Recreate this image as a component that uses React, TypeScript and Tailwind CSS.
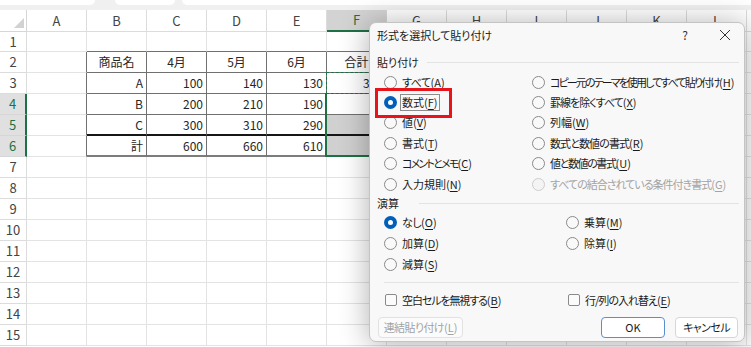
import React from 'react';

const COLS = ['A', 'B', 'C', 'D', 'E', 'F', 'G', 'H', 'I', 'J', 'K', 'L', 'M'];
const ROWS = Array.from({ length: 15 }, (_, i) => i + 1);

const DATA: Record<number, (string | undefined)[]> = {
  2: [undefined, '商品名', '4月', '5月', '6月', '合計'],
  3: [undefined, 'A', '100', '140', '130', '370'],
  4: [undefined, 'B', '200', '210', '190'],
  5: [undefined, 'C', '300', '310', '290'],
  6: [undefined, '計', '600', '660', '610'],
};

function GridCell({ r, c }: { r: number; c: number }) {
  const inTable = r >= 2 && r <= 6 && c >= 1 && c <= 5;
  const leftOfTable = r >= 2 && r <= 6 && c === 0;
  const aboveTable = r === 1 && c >= 1 && c <= 5;
  const rightCls = inTable || leftOfTable ? 'border-r border-r-[#707070]' : 'border-r border-r-[#e3e3e3]';
  let bottomCls = 'border-b border-b-[#e3e3e3]';
  if (aboveTable) bottomCls = 'border-b border-b-[#707070]';
  if (inTable)
    bottomCls =
      r === 5 ? 'border-b-2 border-b-[#161616]' : r === 6 ? 'border-b-2 border-b-[#7c7c7c]' : 'border-b border-b-[#707070]';
  const shaded = c === 5 && (r === 5 || r === 6);
  const text = DATA[r]?.[c];
  const center = r === 2;
  return (
    <div
      className={`w-[60px] shrink-0 h-full flex items-center px-[3px] ${center ? 'justify-center' : 'justify-end'} ${rightCls} ${bottomCls} ${shaded ? 'bg-[#d0d0d0]' : 'bg-white'}`}
    >
      {text}
    </div>
  );
}

function Sheet() {
  return (
    <div className="flex flex-col text-[12px] text-[#262626]">
      {/* top strip */}
      <div className="h-[10px] bg-[#f0f0f0] flex items-start">
        <div className="w-[95px] h-[5px] bg-white rounded-br-[5px]" />
        <div className="w-[60px] h-[5px] bg-white rounded-b-[5px] ml-[20px]" />
        <div className="flex-1 h-[5px] bg-white rounded-bl-[5px] ml-[7px]" />
      </div>
      {/* column headers */}
      <div className="flex h-[22px]">
        <div className="w-[27px] shrink-0 h-full border-r border-b border-[#d6d6d6] bg-white relative flex items-end justify-end pr-[2px] pb-[3px]">
          <div className="w-0 h-0 border-l-[10px] border-l-transparent border-b-[10px] border-b-[#d2d2d2]" />
        </div>
        {COLS.map((c) =>
          c === 'F' ? (
            <div
              key={c}
              className="w-[60px] shrink-0 h-full flex items-center justify-center bg-[#d3d3d3] text-[#1e7145] border-r border-r-[#d6d6d6] border-b-2 border-b-[#1e7145] text-[13px]"
            >
              {c}
            </div>
          ) : (
            <div
              key={c}
              className="w-[60px] shrink-0 h-full flex items-center justify-center bg-white text-[#444] border-r border-b border-[#dcdcdc] text-[13px]"
            >
              {c}
            </div>
          )
        )}
      </div>
      {ROWS.map((r) => {
        const hl = r >= 4 && r <= 6;
        return (
          <div key={r} className={`flex ${r === 1 ? 'h-[20px]' : 'h-[21px]'}`}>
            {hl ? (
              <div className="w-[27px] shrink-0 h-full flex items-center justify-center bg-[#e0e0e0] text-[#1e7145] border-r-2 border-r-[#1e7145] border-b border-b-[#d6d6d6] text-[13px]">
                {r}
              </div>
            ) : (
              <div className="w-[27px] shrink-0 h-full flex items-center justify-center bg-white text-[#444] border-r border-b border-[#dcdcdc] text-[13px]">
                {r}
              </div>
            )}
            {COLS.map((_, c) => (
              <GridCell key={c} r={r} c={c} />
            ))}
          </div>
        );
      })}
    </div>
  );
}

function Radio({ checked, disabled }: { checked?: boolean; disabled?: boolean }) {
  if (checked)
    return (
      <span className="w-[13px] h-[13px] rounded-full bg-[#005fb8] flex items-center justify-center shrink-0">
        <span className="w-[5px] h-[5px] rounded-full bg-white" />
      </span>
    );
  return disabled ? (
    <span className="w-[13px] h-[13px] rounded-full border border-[#cdcdcd] bg-[#f4f4f4] shrink-0" />
  ) : (
    <span className="w-[13px] h-[13px] rounded-full border border-[#8a8a8a] bg-[#f9f9f9] shrink-0" />
  );
}

function Acc({ text, k, t }: { text: string; k: string; t?: string }) {
  return (
    <>
      <span className={t ?? ''}>{text}</span>(<span className="underline underline-offset-[2px]">{k}</span>)
    </>
  );
}

function Label({
  text,
  k,
  focus,
  disabled,
  t,
}: {
  text: string;
  k: string;
  focus?: boolean;
  disabled?: boolean;
  t?: string;
}) {
  return (
    <span
      className={`ml-[3px] px-[1px] leading-[15px] whitespace-nowrap border ${focus ? 'border-[#8c8c8c]' : 'border-transparent'} ${disabled ? 'text-[#a3a3a3]' : 'text-[#1b1b1b]'}`}
    >
      <Acc text={text} k={k} t={t} />
    </span>
  );
}

function Opt({
  text,
  k,
  checked,
  focus,
  disabled,
  h,
  t,
}: {
  text: string;
  k: string;
  checked?: boolean;
  focus?: boolean;
  disabled?: boolean;
  h: string;
  t?: string;
}) {
  return (
    <div className={`flex items-center ${h}`}>
      <Radio checked={checked} disabled={disabled} />
      <Label text={text} k={k} focus={focus} disabled={disabled} t={t} />
    </div>
  );
}

function Check({ text, k, t }: { text: string; k: string; t?: string }) {
  return (
    <div className="flex items-center">
      <span className="w-[12px] h-[12px] rounded-[2px] border border-[#8a8a8a] bg-[#fbfbfb] shrink-0" />
      <span className="ml-[4px] px-[1px] whitespace-nowrap text-[#1b1b1b]">
        <Acc text={text} k={k} t={t} />
      </span>
    </div>
  );
}

function Dialog() {
  return (
    <div className="absolute left-[369px] top-[22px] w-[376px] h-[320px] rounded-[7px] border border-[#c4c4c4] bg-[#f8f8f8] shadow-[0_2px_30px_rgba(0,0,0,0.32)] flex flex-col text-[11px] [font-feature-settings:'palt']">
      {/* title */}
      <div className="h-[24px] flex items-center pl-[7px] pr-[9px]">
        <span className="flex-1 text-[#1b1b1b]">形式を選択して貼り付け</span>
        <span className="w-[20px] text-center text-[#333] text-[12px] mr-[20px]">?</span>
        <svg width="20" height="12" viewBox="0 0 20 12" className="shrink-0">
          <path d="M5 1 L15 11 M15 1 L5 11" stroke="#333" strokeWidth="1" fill="none" />
        </svg>
      </div>
      {/* paste group */}
      <div className="h-[14px] mt-[8px] flex items-center pl-[7px] pr-[5px]">
        <span className="text-[#1b1b1b]">貼り付け</span>
        <div className="flex-1 h-px bg-[#e3e3e3] ml-[8px]" />
      </div>
      <div className="mt-[3px] pl-[14px] grid grid-cols-[148px_1fr]">
        <Opt h="h-[20.4px]" text="すべて" k="A" t="tracking-[-0.5px]" />
        <Opt h="h-[20.4px]" text="コピー元のテーマを使用してすべて貼り付け" k="H" t="tracking-[-1.9px]" />
        <Opt h="h-[20.4px]" text="数式" k="F" checked focus />
        <Opt h="h-[20.4px]" text="罫線を除くすべて" k="X" t="tracking-[-1px]" />
        <Opt h="h-[20.4px]" text="値" k="V" />
        <Opt h="h-[20.4px]" text="列幅" k="W" />
        <Opt h="h-[20.4px]" text="書式" k="T" />
        <Opt h="h-[20.4px]" text="数式と数値の書式" k="R" t="tracking-[-0.9px]" />
        <Opt h="h-[20.4px]" text="コメントとメモ" k="C" t="tracking-[-1.8px]" />
        <Opt h="h-[20.4px]" text="値と数値の書式" k="U" t="tracking-[-1.4px]" />
        <Opt h="h-[20.4px]" text="入力規則" k="N" />
        <Opt h="h-[20.4px]" text="すべての結合されている条件付き書式" k="G" disabled t="tracking-[-1px]" />
      </div>
      {/* operation group */}
      <div className="h-[14px] mt-[2px] flex items-center pl-[7px] pr-[5px]">
        <span className="text-[#1b1b1b]">演算</span>
        <div className="flex-1 h-px bg-[#e3e3e3] ml-[20px]" />
      </div>
      <div className="mt-[2px] pl-[14px] grid grid-cols-[182px_1fr]">
        <Opt h="h-[20.8px]" text="なし" k="O" checked t="tracking-[-0.5px]" />
        <Opt h="h-[20.8px]" text="乗算" k="M" />
        <Opt h="h-[20.8px]" text="加算" k="D" />
        <Opt h="h-[20.8px]" text="除算" k="I" />
        <Opt h="h-[20.8px]" text="減算" k="S" />
      </div>
      <div className="mt-[7px] h-px bg-[#e3e3e3] ml-[14px] mr-[5px]" />
      <div className="mt-[7px] h-[21px] pl-[15px] grid grid-cols-[183px_1fr] items-center">
        <Check text="空白セルを無視する" k="B" t="tracking-[-1.1px]" />
        <Check text="行/列の入れ替え" k="E" t="tracking-[-1px]" />
      </div>
      <div className="mt-[6px] h-[21px] flex pl-[8px] pr-[6px]">
        <div className="w-[85px] h-full rounded-[4px] border border-[#e2e2e2] bg-[#fbfbfb] flex items-center justify-center text-[#a3a3a3]">
          <Acc text="連結貼り付け" k="L" t="tracking-[-0.6px]" />
        </div>
        <div className="flex-1" />
        <div className="w-[64px] h-full rounded-[4px] border border-[#5a8fcf] bg-white flex items-center justify-center text-[#1b1b1b]">
          OK
        </div>
        <div className="w-[63px] h-full ml-[10px] rounded-[4px] border border-[#d6d6d6] bg-white flex items-center justify-center text-[#1b1b1b] tracking-[-0.6px]">
          キャンセル
        </div>
      </div>
      {/* red annotation */}
      <div className="absolute left-[5px] top-[65px] w-[77px] h-[30px] border-[3px] border-[#e8141b]" />
    </div>
  );
}

export default function App() {
  return (
    <div className="relative w-[751px] h-[347px] overflow-hidden bg-white font-['Noto_Sans_CJK_JP','Noto_Sans',sans-serif]">
      <Sheet />
      {/* copy marquee F3 */}
      <div className="absolute left-[326px] top-[72px] w-[61px] h-[22px] border border-dashed border-[#1e7145]" />
      {/* selection F4:F6 */}
      <div className="absolute left-[325px] top-[93px] w-[62px] h-[64px] border-l-2 border-b-2 border-[#1e7145]" />
      <Dialog />
    </div>
  );
}
